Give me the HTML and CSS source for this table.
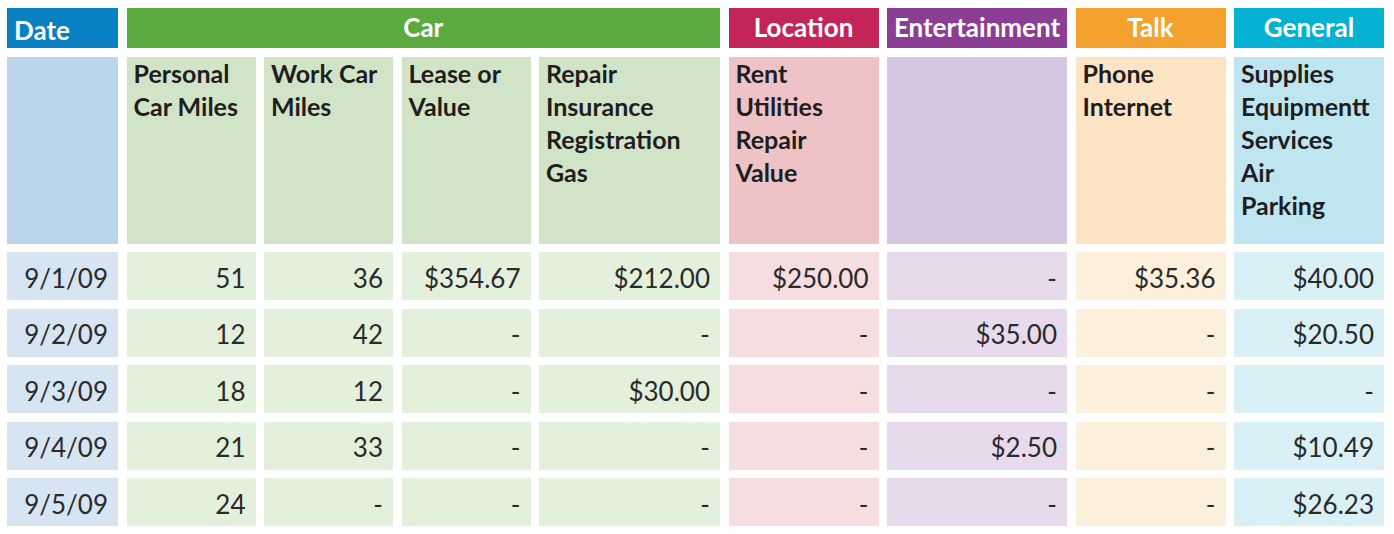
FILE: index.html
```html
<!DOCTYPE html>
<html>
<head>
<meta charset="utf-8">
<link rel="stylesheet" href="styles.css">
</head>
<body>
<div class="sheet">
  <div class="hd hd-left date">Date</div>
  <div class="hd car span4">Car</div>
  <div class="hd loc">Location</div>
  <div class="hd ent">Entertainment</div>
  <div class="hd talk">Talk</div>
  <div class="hd gen">General</div>

  <div class="sub date"></div>
  <div class="sub car">Personal<br>Car Miles</div>
  <div class="sub car">Work Car<br>Miles</div>
  <div class="sub car">Lease or<br>Value</div>
  <div class="sub car">Repair<br>Insurance<br>Registration<br>Gas</div>
  <div class="sub loc">Rent<br>Utilities<br>Repair<br>Value</div>
  <div class="sub ent"></div>
  <div class="sub talk">Phone<br>Internet</div>
  <div class="sub gen">Supplies<br>Equipmentt<br>Services<br>Air<br>Parking</div>

  <div class="cell date">9/1/09</div>
  <div class="cell car">51</div>
  <div class="cell car">36</div>
  <div class="cell car">$354.67</div>
  <div class="cell car">$212.00</div>
  <div class="cell loc">$250.00</div>
  <div class="cell ent">-</div>
  <div class="cell talk">$35.36</div>
  <div class="cell gen">$40.00</div>

  <div class="cell date">9/2/09</div>
  <div class="cell car">12</div>
  <div class="cell car">42</div>
  <div class="cell car">-</div>
  <div class="cell car">-</div>
  <div class="cell loc">-</div>
  <div class="cell ent">$35.00</div>
  <div class="cell talk">-</div>
  <div class="cell gen">$20.50</div>

  <div class="cell date">9/3/09</div>
  <div class="cell car">18</div>
  <div class="cell car">12</div>
  <div class="cell car">-</div>
  <div class="cell car">$30.00</div>
  <div class="cell loc">-</div>
  <div class="cell ent">-</div>
  <div class="cell talk">-</div>
  <div class="cell gen">-</div>

  <div class="cell date">9/4/09</div>
  <div class="cell car">21</div>
  <div class="cell car">33</div>
  <div class="cell car">-</div>
  <div class="cell car">-</div>
  <div class="cell loc">-</div>
  <div class="cell ent">$2.50</div>
  <div class="cell talk">-</div>
  <div class="cell gen">$10.49</div>

  <div class="cell date">9/5/09</div>
  <div class="cell car">24</div>
  <div class="cell car">-</div>
  <div class="cell car">-</div>
  <div class="cell car">-</div>
  <div class="cell loc">-</div>
  <div class="cell ent">-</div>
  <div class="cell talk">-</div>
  <div class="cell gen">$26.23</div>
</div>
</body>
</html>
```

FILE: styles.css
```css
html, body {
  margin: 0;
  padding: 0;
  background: #ffffff;
}

body {
  font-family: Lato, "Liberation Sans", sans-serif;
}

.sheet {
  display: grid;
  grid-template-columns: 111px 129px 129px 129px 181px 150px 180px 150px 150px;
  grid-template-rows: 40px 187px repeat(5, 48px);
  column-gap: 8.5px;
  row-gap: 8.5px;
  padding: 8px 0 0 7px;
}

.span4 {
  grid-column: span 4;
}

/* Group header row */
.hd {
  color: #ffffff;
  font-weight: 700;
  font-size: 26px;
  line-height: 30px;
  display: flex;
  align-items: center;
  justify-content: center;
  padding-bottom: 3px;
  box-sizing: border-box;
}

.hd-left {
  justify-content: flex-start;
  padding: 3px 0 0 7px;
}

.hd.date { background: #0880c2; }
.hd.car  { background: #5aaa40; }
.hd.loc  { background: #c3245a; }
.hd.ent  { background: #8c3e95; }
.hd.talk { background: #f4a12e; }
.hd.gen  { background: #04b1d2; }

/* Sub header row */
.sub {
  color: #1e1e1e;
  font-weight: 700;
  font-size: 25px;
  line-height: 33px;
  padding: 0 0 0 7px;
  white-space: nowrap;
}

.sub.date { background: #bdd5eb; }
.sub.car  { background: #d2e4c7; }
.sub.loc  { background: #efc3c6; }
.sub.ent  { background: #d8c5e1; }
.sub.talk { background: #fde4c5; }
.sub.gen  { background: #bfe5f1; }

/* Data cells */
.cell {
  color: #2a2a2a;
  font-size: 26px;
  line-height: 30px;
  display: flex;
  align-items: center;
  justify-content: flex-end;
  padding: 3px 10px 0 0;
  box-sizing: border-box;
}

.cell.date { background: #d7e5f3; }
.cell.car  { background: #e3f0dc; }
.cell.loc  { background: #f6dde0; }
.cell.ent  { background: #e7daec; }
.cell.talk { background: #fcefdb; }
.cell.gen  { background: #d9f0f7; }
```
